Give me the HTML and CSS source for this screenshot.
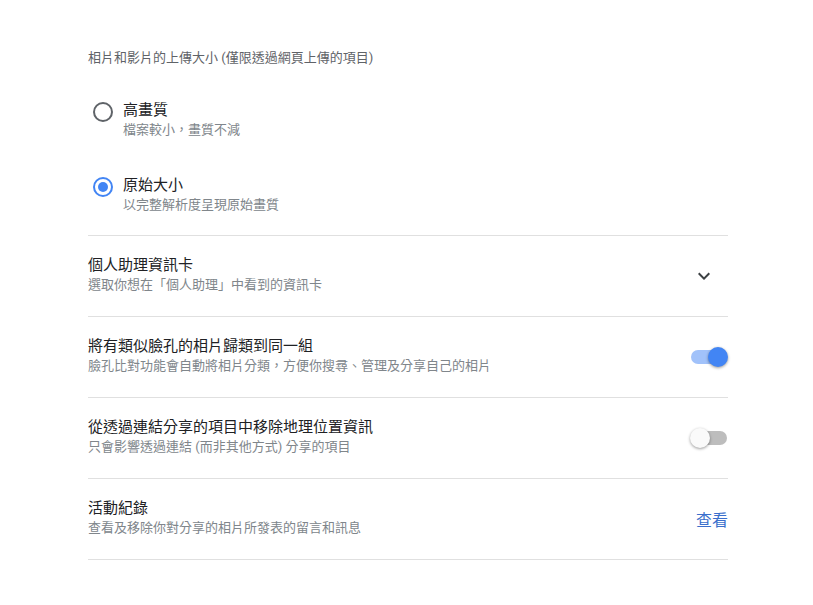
FILE: index.html
```html
<!DOCTYPE html>
<html>
  <head>
    <meta name="viewport" content="width=device-width, initial-scale=1">
    <link rel="stylesheet" href="styles.css">
  </head>
  <body>
    <div class="settings">
      <p class="section-label">相片和影片的上傳大小 (僅限透過網頁上傳的項目)</p>

      <div class="options">
        <div class="option">
          <span class="radio"></span>
          <div class="text">
            <p class="title">高畫質</p>
            <p class="sub">檔案較小，畫質不減</p>
          </div>
        </div>
        <div class="option">
          <span class="radio checked"></span>
          <div class="text">
            <p class="title">原始大小</p>
            <p class="sub">以完整解析度呈現原始畫質</p>
          </div>
        </div>
      </div>

      <div class="row">
        <div class="text">
          <p class="title">個人助理資訊卡</p>
          <p class="sub">選取你想在「個人助理」中看到的資訊卡</p>
        </div>
        <svg class="chevron" width="24" height="24" viewBox="0 0 24 24">
          <path d="M7.41 8.59L12 13.17l4.59-4.58L18 10l-6 6-6-6z" fill="#3c4043"/>
        </svg>
      </div>

      <div class="row">
        <div class="text">
          <p class="title">將有類似臉孔的相片歸類到同一組</p>
          <p class="sub">臉孔比對功能會自動將相片分類，方便你搜尋、管理及分享自己的相片</p>
        </div>
        <div class="switch on"><span class="knob"></span></div>
      </div>

      <div class="row">
        <div class="text">
          <p class="title">從透過連結分享的項目中移除地理位置資訊</p>
          <p class="sub">只會影響透過連結 (而非其他方式) 分享的項目</p>
        </div>
        <div class="switch"><span class="knob"></span></div>
      </div>

      <div class="row">
        <div class="text">
          <p class="title">活動紀錄</p>
          <p class="sub">查看及移除你對分享的相片所發表的留言和訊息</p>
        </div>
        <a class="link" href="#">查看</a>
      </div>
    </div>
  </body>
</html>
```

FILE: styles.css
```css
body {
  margin: 0;
  background-color: #ffffff;
  font-family: Roboto, "Noto Sans CJK TC", sans-serif;
  color: #202124;
}

p {
  margin: 0;
}

.settings {
  width: 640px;
  margin-left: 88px;
  padding-top: 48px;
}

.section-label {
  font-size: 13px;
  line-height: 20px;
  color: #5f6368;
  margin-bottom: 32px;
}

.options {
  display: flex;
  flex-direction: column;
  gap: 35px;
  padding-bottom: 20px;
  border-bottom: 1px solid #e0e0e0;
}

.option {
  display: flex;
  align-items: flex-start;
  gap: 10px;
}

.title {
  font-size: 15px;
  line-height: 20px;
  color: #202124;
}

.sub {
  font-size: 13px;
  line-height: 20px;
  color: #80868b;
}

.radio {
  box-sizing: border-box;
  width: 20px;
  height: 20px;
  margin: 2px 0 0 5px;
  border: 2px solid #5f6368;
  border-radius: 50%;
  display: flex;
  align-items: center;
  justify-content: center;
  flex-shrink: 0;
}

.radio.checked {
  border-color: #4285f4;
}

.radio.checked::after {
  content: "";
  width: 10px;
  height: 10px;
  border-radius: 50%;
  background: #4285f4;
}

.row {
  display: flex;
  justify-content: space-between;
  align-items: center;
  height: 80px;
  border-bottom: 1px solid #e0e0e0;
}

.row .text {
  margin-top: -2px;
}

.chevron {
  margin-right: 12px;
}

.switch {
  position: relative;
  width: 36px;
  height: 14px;
  border-radius: 7px;
  background: #bdbdbd;
  margin-right: 1px;
}

.switch .knob {
  position: absolute;
  top: -3px;
  left: -1px;
  width: 20px;
  height: 20px;
  border-radius: 50%;
  background: #fafafa;
  box-shadow: 0 1px 3px rgba(0, 0, 0, 0.4);
}

.switch.on {
  background: #a1c2fa;
}

.switch.on .knob {
  left: auto;
  right: -1px;
  background: #4285f4;
}

.link {
  font-size: 16px;
  color: #3b6fcc;
  text-decoration: none;
}
```
